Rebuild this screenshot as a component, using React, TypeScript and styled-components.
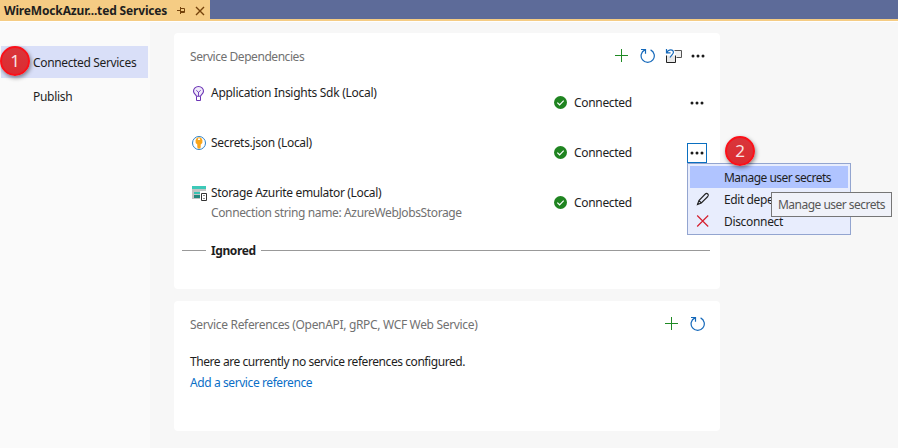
import React from "react";
import styled, { createGlobalStyle } from "styled-components";

const Global = createGlobalStyle`
  * { box-sizing: border-box; }
  body { margin: 0; background: #f7f7f7; }
  svg { display: block; flex: none; }
`;

const Window = styled.div`
  width: 898px; height: 448px; overflow: hidden; position: relative;
  display: flex; flex-direction: column;
  font: 12px/16px "Segoe UI", "Noto Sans", "Open Sans", sans-serif;
  color: #1e1e1e; background: #f7f7f7;
`;
const TabStrip = styled.div`
  height: 21px; display: flex; flex: none; background: #5d6b99; border-bottom: 2px solid #f5cc84;
`;
const Tab = styled.div`
  width: 210px; height: 21px; padding-left: 4px; background: #f5cc84;
  display: flex; align-items: center; flex: none;
`;
const TabTitle = styled.div`width: 173px; display: flex;`;
const TabIcons = styled.div`display: flex; align-items: center; gap: 9px;`;
const Text = styled.span<{ $ls?: number; $color?: string; $bold?: boolean; $drop?: boolean }>`
  white-space: nowrap; letter-spacing: ${p => p.$ls ?? 0}px;
  color: ${p => p.$color ?? "inherit"}; font-weight: ${p => (p.$bold ? 700 : 400)};
  padding-top: ${p => (p.$drop ? 2 : 0)}px;
`;
const Body = styled.div`display: flex; flex: 1; border-top: 1px solid #fff;`;
const Sidebar = styled.nav`width: 150px; padding: 24px 2px 0 1px; background: #fafafa;`;
const NavItem = styled.div<{ $active?: boolean }>`
  height: ${p => (p.$active ? 32 : 36)}px; padding-left: 32px;
  display: flex; align-items: center; background: ${p => (p.$active ? "#d9dff8" : "transparent")};
`;
const Main = styled.main`padding: 11px 0 0 24px; display: flex; flex-direction: column; gap: 12px;`;
const Card = styled.section<{ $h: number }>`
  width: 546px; height: ${p => p.$h}px; background: #fff; border-radius: 4px;
`;
const CardHead = styled.header<{ $end: number }>`
  height: 46px; padding: 0 ${p => p.$end}px 0 16px; display: flex; align-items: center; justify-content: space-between;
`;
const Tools = styled.div`display: flex; align-items: center; gap: 9px;`;
const Service = styled.div`height: 50px; display: flex; padding-left: 16px;`;
const ServiceIcon = styled.div`width: 21px; padding-top: 6px;`;
const ServiceInfo = styled.div`width: 343px; padding-top: 6px; display: flex; flex-direction: column; gap: 4px;`;
const Status = styled.div`width: 133px; height: 19px; margin-top: 14px; display: flex; align-items: center; gap: 7px;`;
const StatusText = styled(Text)`padding-top: 1px;`;
const More = styled.button<{ $focus?: boolean }>`
  width: 20px; height: 20px; margin-top: 14px; padding: 0; background: #fff;
  display: grid; place-items: center; border: 1px solid ${p => (p.$focus ? "#0a6fc0" : "transparent")};
`;
const Divider = styled.div`
  display: flex; align-items: center; gap: 5px; padding: 0 10px 0 8px; height: 16px; margin-top: 13px;
`;
const Line = styled.div<{ $w?: number }>`
  height: 1px; background: #999; ${p => (p.$w ? `width: ${p.$w}px;` : "flex: 1;")}
`;
const References = styled.div`padding: 7px 16px; display: flex; flex-direction: column; gap: 5px;`;
const Menu = styled.div`
  position: absolute; left: 687px; top: 163px; width: 164px; height: 72px; padding: 2px;
  background: #e8edfd; border: 1px solid #93a5d0;
`;
const MenuItem = styled.div<{ $active?: boolean }>`
  height: 22px; display: flex; align-items: center; padding-left: 6px; gap: 14px;
  background: ${p => (p.$active ? "#b0c4ff" : "transparent")};
`;
const IconSlot = styled.div`width: 14px; flex: none;`;
const Tooltip = styled.div`
  position: absolute; left: 771px; top: 192px; width: 121px; height: 25px; padding-left: 6px;
  display: flex; align-items: center; background: #f0f2f9; border: 1px solid #767676;
`;
const Marker = styled.div<{ $x: number; $y: number }>`
  position: absolute; left: ${p => p.$x}px; top: ${p => p.$y}px; width: 30px; height: 30px;
  border-radius: 50%; border: 2px solid #fb1018; background: linear-gradient(#d8363b, #dd2b30);
  color: #f8e4e4; font: 17px/25px "Noto Sans", "Open Sans", sans-serif; text-align: center;
  box-shadow: 1px 2px 4px rgba(0, 0, 0, 0.45);
`;

const Plus = () => (
  <svg width="16" height="16" viewBox="0 0 16 16"><path d="M0 7h13v1H0zM6 1h1v13H6z" fill="#1f8a24" /></svg>
);
const Refresh = () => (
  <svg width="16" height="16" viewBox="0 0 16 16" fill="none" stroke="#1468ba" strokeWidth="1.2">
    <path d="M10.6 1.9A6.600 6.600 0 1 1 4.800 1.900M1 1.500h4.500v4.200" />
  </svg>
);
const Restore = () => (
  <svg width="17" height="16" viewBox="0 0 17 16" fill="none">
    <path d="M9.500 2.500h7v7h-5" fill="#f0f0f0" stroke="#555" />
    <path d="M1.500 7.500v7h9v-7" fill="#e8e8e8" stroke="#222" />
    <path d="M4 7.500h4.500v-2H4z" fill="#fff" />
    <path d="M1.500 1v3.800h4M1.800 4.500C3.500 1 8.600 1 8.400 4.500C8.200 6 6 7.500 5 9.500" stroke="#1468ba" strokeWidth="1.200" />
  </svg>
);
const Dots = () => (
  <svg width="14" height="4" viewBox="0 0 14 4" fill="#1b1b1b"><circle cx="2" cy="2" r="1.5" /><circle cx="7" cy="2" r="1.5" /><circle cx="12" cy="2" r="1.5" /></svg>
);
const Check = () => (
  <svg width="13" height="13" viewBox="0 0 13 13"><circle cx="6.5" cy="6.5" r="6.5" fill="#1f8420" /><path d="M3.3 6.6l2.3 2.2 4.1-4.1" fill="none" stroke="#fff" strokeWidth="1.2" /></svg>
);
const Bulb = () => (
  <svg width="16" height="16" viewBox="0 0 16 16" fill="none" stroke="#6b35b5">
    <path d="M6.500 11.300C6.200 9.500 3.500 8.800 3.500 6.200a5 4.700 0 0 1 10 0c0 2.600-2.700 3.300-3 5.100z" fill="#f0eafa" strokeWidth="1.100" />
    <path d="M6.500 11.500v4h4v-4" />
    <path d="M8.500 11V7M6.300 5.300l2.200 2 2.200-2" strokeWidth="0.900" />
  </svg>
);
const Key = () => (
  <svg width="16" height="16" viewBox="0 0 16 16">
    <circle cx="9" cy="8" r="6.5" fill="#fff" stroke="#2d7fc4" />
    <path d="M9 2.200a3.900 3.900 0 0 1 1.700 7.200v3.200L9 14l-1.700-1.400V9.400A3.900 3.900 0 0 1 9 2.200z" fill="#f9a51a" />
    <ellipse cx="9" cy="4.200" rx="1.200" ry="0.900" fill="#fff" />
  </svg>
);
const Storage = () => (
  <svg width="17" height="17" viewBox="0 0 17 17">
    <path d="M2 1h14v13H2z" fill="#c4c4c4" /><path d="M2 1h14v3H2z" fill="#3dc9b8" />
    <path d="M4 7h6v2H4z" fill="#38c3b3" /><path d="M4 10h6v3H4z" fill="#24877d" />
    <path d="M10 6h7v10h-7z" fill="#fff" />
    <path d="M11.500 8.500h5v7h-5z" fill="#fff" stroke="#333" /><path d="M13.500 10h1v1h-1zM13.500 13h1v1h-1z" fill="#222" />
  </svg>
);
const Pencil = () => (
  <svg width="14" height="14" viewBox="0 0 14 14" fill="none" stroke="#222" strokeWidth="1.1"><path d="M1.500 12.500l1.400-4L9.300 2q1.300-1.200 2.500 0t0 2.500L5.300 11zM2.900 8.500L5.300 11" /></svg>
);
const Cross = () => (
  <svg width="14" height="14" viewBox="0 0 14 14" fill="none" stroke="#d5202f" strokeWidth="1.2"><path d="M1.200 1.500l11 11M12.200 1.500l-11 11" /></svg>
);
const Pin = () => (
  <svg width="9" height="9" viewBox="0 0 9 9" fill="none" stroke="#75430c"><path d="M0 4.500h3M3.500 1v7M3.500 2.500h4v4h-4M3.500 5.500h4" /></svg>
);
const Close = () => (
  <svg width="10" height="10" viewBox="0 0 10 10" fill="none" stroke="#75430c" strokeWidth="1.4"><path d="M1 1l8 8M9 1l-8 8" /></svg>
);

const services = [
  { icon: <Bulb />, name: "Application Insights Sdk (Local)", ls: -0.28 },
  { icon: <Key />, name: "Secrets.json (Local)", ls: -0.3, focus: true },
  {
    icon: <Storage />, name: "Storage Azurite emulator (Local)", ls: -0.34,
    note: "Connection string name: AzureWebJobsStorage", menuless: true,
  },
];

export default function App() {
  return (
    <Window>
      <Global />
      <TabStrip>
        <Tab>
          <TabTitle><Text $bold $ls={-0.16}>WireMockAzur...ted Services</Text></TabTitle>
          <TabIcons><Pin /><Close /></TabIcons>
        </Tab>
      </TabStrip>
      <Body>
        <Sidebar>
          <NavItem $active><Text $drop $ls={-0.35}>Connected Services</Text></NavItem>
          <NavItem><Text $drop $ls={-0.3}>Publish</Text></NavItem>
        </Sidebar>
        <Main>
          <Card $h={256}>
            <CardHead $end={15}>
              <Text $drop $ls={-0.45} $color="#717171">Service Dependencies</Text>
              <Tools><Plus /><Refresh /><Restore /><Dots /></Tools>
            </CardHead>
            {services.map(s => (
              <Service key={s.name}>
                <ServiceIcon>{s.icon}</ServiceIcon>
                <ServiceInfo>
                  <Text $ls={s.ls}>{s.name}</Text>
                  {s.note && <Text $ls={-0.37} $color="#717171">{s.note}</Text>}
                </ServiceInfo>
                <Status><Check /><StatusText $ls={-0.32}>Connected</StatusText></Status>
                {!s.menuless && <More $focus={s.focus}><Dots /></More>}
              </Service>
            ))}
            <Divider><Line $w={24} /><Text $bold $drop $ls={-0.4}>Ignored</Text><Line /></Divider>
          </Card>
          <Card $h={130}>
            <CardHead $end={14}>
              <Text $drop $ls={-0.33} $color="#717171">Service References (OpenAPI, gRPC, WCF Web Service)</Text>
              <Tools><Plus /><Refresh /></Tools>
            </CardHead>
            <References>
              <Text $ls={-0.43}>There are currently no service references configured.</Text>
              <Text $ls={-0.41} $color="#0b6fc7">Add a service reference</Text>
            </References>
          </Card>
        </Main>
      </Body>
      <Menu>
        <MenuItem $active><IconSlot /><Text $drop $ls={-0.52}>Manage user secrets</Text></MenuItem>
        <MenuItem><IconSlot><Pencil /></IconSlot><Text $drop $ls={-0.4}>Edit dependency</Text></MenuItem>
        <MenuItem><IconSlot><Cross /></IconSlot><Text $drop $ls={-0.33}>Disconnect</Text></MenuItem>
      </Menu>
      <Tooltip><Text $ls={-0.52} $color="#575757">Manage user secrets</Text></Tooltip>
      <Marker $x={0} $y={46}>1</Marker>
      <Marker $x={725} $y={136}>2</Marker>
    </Window>
  );
}
